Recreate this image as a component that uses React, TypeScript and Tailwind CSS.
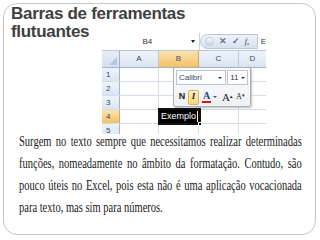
import React from 'react';

const rows = ['1', '2', '3', '4', '5'];

const ExcelShot: React.FC = () => {
    return (
        <div className="relative w-[164px] h-[101px] overflow-hidden bg-white font-['Liberation_Sans',Arial,sans-serif] text-[8px] text-[#3b4a5c]">
            {/* name box + formula bar */}
            <div className="flex h-[18px] border-b border-[#b9c9dc] bg-white">
                <div className="w-[98px] flex items-center border-r border-[#c8d4e3]">
                    <span className="flex-1 text-center text-[8px] text-[#333] pl-[2px]">B4</span>
                    <span className="w-0 h-0 border-l-[2px] border-r-[2px] border-t-[3px] border-l-transparent border-r-transparent border-t-[#222] mr-[4px]" />
                </div>
                <div className="w-[58px] flex items-center gap-[5px] rounded-l-full bg-gradient-to-b from-[#eef3fa] to-[#d6e1ef] border border-[#b7c7db] pl-[4px] my-[1px]">
                    <span className="w-[9px] h-[9px] rounded-full bg-gradient-to-b from-[#f7f9fc] to-[#c9d6e6] border border-[#bccadc]" />
                    <span className="text-[9px] text-[#6b7786] font-bold leading-none">✕</span>
                    <span className="text-[9px] text-[#5c6b7c] font-bold leading-none">✓</span>
                    <span className="text-[8px] italic text-[#444] leading-none font-['Liberation_Serif',serif]">f<sub className="text-[5px]">x</sub></span>
                </div>
                <div className="flex-1 flex items-center pl-[3px] text-[8px] text-[#333]">E</div>
            </div>
            {/* column headers */}
            <div className="flex h-[17px] border-b border-[#9fb4cc]">
                <div className="w-[18px] relative bg-gradient-to-b from-[#e8eef7] to-[#d4dfee] border-r border-[#9fb4cc]">
                    <span className="absolute right-[2px] bottom-[2px] w-0 h-0 border-l-[8px] border-l-transparent border-b-[8px] border-b-[#b7c6d8]" />
                </div>
                <div className="w-[39px] flex items-center justify-center bg-gradient-to-b from-[#eef3fa] to-[#dae4f1] border-r border-[#b9c9dc]">A</div>
                <div className="w-[40px] flex items-center justify-center bg-gradient-to-b from-[#fbe3b2] to-[#f5c163] border-r border-[#e0a84c]">B</div>
                <div className="w-[40px] flex items-center justify-center bg-gradient-to-b from-[#eef3fa] to-[#dae4f1] border-r border-[#b9c9dc]">C</div>
                <div className="flex-1 flex items-center justify-center bg-gradient-to-b from-[#eef3fa] to-[#dae4f1]">D</div>
            </div>
            {/* rows */}
            {rows.map((r) => (
                <div key={r} className="flex h-[14px] border-b border-[#d5dde8]">
                    <div
                        className={
                            r === '4'
                                ? 'w-[18px] flex items-center pl-[4px] bg-gradient-to-b from-[#fbe3b2] to-[#f5c163] border-r border-[#e0a84c]'
                                : 'w-[18px] flex items-center pl-[4px] bg-gradient-to-b from-[#eef3fa] to-[#dae4f1] border-r border-[#9fb4cc]'
                        }
                    >
                        {r}
                    </div>
                    <div className="w-[39px] border-r border-[#d5dde8]" />
                    <div className="w-[40px] border-r border-[#d5dde8]" />
                    <div className="w-[40px] border-r border-[#d5dde8]" />
                    <div className="flex-1" />
                </div>
            ))}
            {/* selected cell */}
            <div className="absolute left-[56px] top-[75px] w-[43px] h-[17px] border-2 border-[#111] bg-black flex items-center">
                <span className="text-white text-[9px] pl-[1px] leading-none">Exemplo</span>
                <span className="ml-[1px] w-[1px] h-[11px] bg-white" />
                <span className="absolute -right-[3px] -bottom-[3px] w-[4px] h-[4px] bg-black border border-white" />
            </div>
            {/* floating mini toolbar */}
            <div className="absolute left-[71px] top-[34px] w-[78px] h-[40px] rounded-[2px] border border-[#a9b1bb] bg-gradient-to-b from-[#fbfcfd] to-[#eef1f5] shadow-[1px_1px_2px_rgba(0,0,0,0.25)] px-[2px] pt-[2px]">
                <div className="flex gap-[1px] h-[15px]">
                    <div className="w-[51px] flex items-center bg-white border border-[#b8c4d2] pl-[2px]">
                        <span className="flex-1 text-[8px] text-[#3a4a60]">Calibri</span>
                        <span className="w-0 h-0 border-l-[2px] border-r-[2px] border-t-[2px] border-l-transparent border-r-transparent border-t-[#333] mr-[3px]" />
                    </div>
                    <div className="w-[21px] flex items-center bg-white border border-[#b8c4d2] pl-[2px]">
                        <span className="flex-1 text-[8px] text-[#333]">11</span>
                        <span className="w-0 h-0 border-l-[2px] border-r-[2px] border-t-[2px] border-l-transparent border-r-transparent border-t-[#333] mr-[2px]" />
                    </div>
                </div>
                <div className="flex items-center h-[18px] mt-[3px] text-[#222]">
                    <span className="w-[12px] text-center text-[9px] font-bold">N</span>
                    <span className="w-[11px] h-[15px] flex items-center justify-center rounded-[2px] border border-[#e2b24f] bg-gradient-to-b from-[#fdf0c4] to-[#f8d77e] text-[9px] italic font-bold font-['Liberation_Serif',serif]">I</span>
                    <span className="ml-[3px] flex flex-col items-center w-[9px]">
                        <span className="text-[10px] leading-[10px] font-bold text-[#1f3f8f] font-['Liberation_Serif',serif]">A</span>
                        <span className="w-[9px] h-[2px] bg-[#e01818]" />
                    </span>
                    <span className="ml-[2px] w-0 h-0 border-l-[2px] border-r-[2px] border-t-[2px] border-l-transparent border-r-transparent border-t-[#555]" />
                    <span className="ml-[5px] text-[11px] leading-none font-['Liberation_Serif',serif]">A<sup className="text-[5px]">▴</sup></span>
                    <span className="ml-[3px] text-[8px] leading-none font-['Liberation_Serif',serif]">A<sup className="text-[5px]">▾</sup></span>
                </div>
            </div>
        </div>
    );
};

const App: React.FC = () => {
    return (
        <div className="w-[320px] h-[240px] bg-white pt-[3px] pl-[3px]">
            <div className="w-[313px] h-[232px] rounded-[14px] border border-[#c6c6c6] bg-white">
                <h1 className="ml-[7px] pt-[1px] w-fit text-[17px] leading-[18px] font-bold tracking-[-0.3px] text-[#404040] font-['Liberation_Sans',Arial,sans-serif]">
                    Barras de ferramentas
                    <br />
                    flutuantes
                </h1>
                <div className="ml-[98px] mt-[-8px] w-fit">
                    <ExcelShot />
                </div>
                {/* text in the slide is horizontally condensed */}
                <div className="mt-[-3px] pl-[15px]">
                    <p className="w-[377px] origin-left scale-x-[0.75] text-[14px] leading-[22px] text-justify text-[#1a1a1a] font-['Liberation_Serif','Times_New_Roman',serif]">
                        Surgem no texto sempre que necessitamos realizar determinadas funções, nomeadamente no âmbito da formatação. Contudo, são pouco úteis no Excel, pois esta não é uma aplicação vocacionada para texto, mas sim para números.
                    </p>
                </div>
            </div>
        </div>
    );
};

export default App;
